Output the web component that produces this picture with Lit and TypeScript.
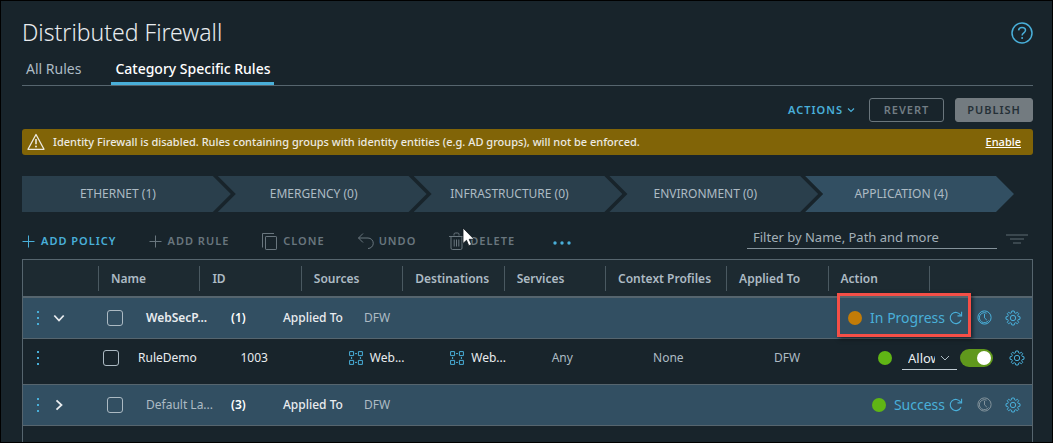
import { LitElement, html, svg, css, nothing } from "lit";
import { customElement, state } from "lit/decorators.js";
import { classMap } from "lit/directives/class-map.js";

const icon = (size: number, body: unknown, cls = "") => html`
  <svg class="icon ${cls}" width=${size} height=${size} viewBox="0 0 ${size} ${size}" aria-hidden="true">${body}</svg>
`;

const plus = () => icon(13, svg`<path d="M6.5 .5v12M.5 6.5h12" />`, "plus");
const clone = () => icon(18, svg`<path d="M1.500 15.500V1.500H13" /><rect x="4.500" y="4.500" width="11" height="13" rx=".6" />`);
const undo = () => icon(18, svg`<path d="M6 1.500 1.500 6 6 10.500M1.500 6H11a5 5 0 0 1 0 10.500" />`);
const trash = () => icon(18, svg`<path d="M1 4.500h15M3 4.500V16q0 1.500 1.500 1.500h8q1.500 0 1.500-1.500V4.500M6 3.500V2.300Q6 1 7.300 1h2.400Q11 1 11 2.300v1.200M6.200 7.500v7M8.500 7.500v7M10.800 7.500v7" />`);
const help = () => icon(22, svg`<circle cx="11" cy="11" r="10" stroke-width="1.500" /><path stroke-width="1.500" d="M7.600 8.400C7.700 6.500 9.200 5.400 11 5.400c2 0 3.500 1.200 3.500 2.900 0 2.500-3.400 2.500-3.400 5.100" /><circle class="fill" cx="11.100" cy="16" r="1" />`);
const warning = () => icon(18, svg`<path stroke-width="1.300" stroke-linejoin="round" d="M9 1.500 17 16.300H1z" /><path stroke-width="1.600" d="M9 6v5.200" /><circle class="fill" cx="9" cy="13.400" r="1" />`);
const down = (size = 12) => icon(size, size === 12
  ? svg`<path stroke-width="1.800" d="m1.300 3.500 4.700 5 4.700-5" />`
  : svg`<path stroke-width="1.200" d="m1 2.500 3 3 3-3" />`);
const right = () => icon(12, svg`<path stroke-width="1.800" d="m3.500 1.300 5 4.700-5 4.700" />`);
const refresh = () => icon(14, svg`<path stroke-width="1.100" d="M12 9.200A5.600 5.600 0 1 1 11.600 4M12.600 .8v4.100H8.500" />`);
const clock = () => icon(15, svg`<circle cx="7.500" cy="7.500" r="6.600" /><path d="M9.600 3.200A5 5 0 1 0 11.500 10.500M7.500 3.900v4l2.300 2.100" />`);
const gear = () => icon(16, svg`<circle cx="8" cy="8" r="2.700" /><path stroke-linejoin="round" d="m6.800 1-.4 1.800-1.200.5L3.600 2.300 2.300 3.600l1 1.600-.5 1.200L1 6.800v2.400l1.800.4.5 1.200-1 1.600 1.300 1.300 1.600-1 1.200.5.400 1.800h2.400l.4-1.800 1.200-.5 1.600 1 1.300-1.300-1-1.600.5-1.200 1.800-.4V6.800l-1.800-.4-.5-1.200 1-1.600-1.300-1.300-1.600 1-1.200-.5L9.200 1z" />`);
const group = () => icon(14, svg`<path d="M.6.6h4v4h-4zM9.400.6h4v4h-4zM.6 9.400h4v4h-4zM9.400 9.400h4v4h-4zM6 2.600h2M6 11.400h2M2.600 6v2M11.400 6v2" />`);
const kebab = () => icon(14, svg`<path class="fill" d="M6 0h2v2H6zM6 6h2v2H6zM6 12h2v2H6z" />`);

interface Policy {
  name: string;
  count: number;
  status: string;
  muted: boolean;
  pending: boolean;
  open: boolean;
}

@customElement("app-root")
export class AppRoot extends LitElement {
  static styles = css`
    :host {
      display: flex;
      flex-direction: column;
      box-sizing: border-box;
      min-height: 100vh;
      padding: 16px 19px 0 21px;
      border: 1px solid #000;
      background: #18242b;
      color: #adbbc4;
      font: 12px/16px "Noto Sans", "Open Sans", sans-serif;
    }
    * { box-sizing: border-box; }
    button, input, select { font: inherit; color: inherit; }
    button { display: inline-flex; align-items: center; margin: 0; padding: 0; border: 0; background: none; }
    .icon { display: block; flex: none; fill: none; stroke: currentColor; }
    .fill { fill: currentColor; stroke: none; }
    header { display: flex; justify-content: space-between; }
    h1 { margin: 0; font-size: 23px; line-height: 30px; font-weight: 300; color: #e9ecef; }
    .help { color: #49afd9; height: 32px; }
    .tabs { display: flex; gap: 26px; margin-top: 7px; border-bottom: 1px solid #56656e; }
    .tab { height: 29px; padding: 0 4px 3px; font-size: 14px; }
    .tab.on { color: #fff; font-weight: 500; box-shadow: inset 0 -3px #49afd9; }
    .top-actions { display: flex; justify-content: flex-end; align-items: center; margin-top: 12px; }
    .caps { font-size: 11px; letter-spacing: 1px; font-weight: 600; }
    .actions { gap: 4px; margin-right: 14px; color: #49afd9; }
    .box { justify-content: center; height: 24px; border: 1px solid #6a767d; border-radius: 3px; color: #727d84; }
    .revert { width: 75px; margin-right: 11px; }
    .publish { width: 78px; background: #737b80; border-color: #737b80; color: #253037; }
    .banner { display: flex; align-items: center; height: 26px; margin-top: 7px; padding: 0 12px 0 5px; border-radius: 3px; background: #816407; color: #eceae2; }
    .banner p { flex: 1; margin: 0 0 0 8px; font-size: 11px; font-weight: 500; }
    .banner a { color: #fff; font-size: 11px; font-weight: 500; }
    .steps { display: flex; height: 36px; margin: 21px 19px 0 0; }
    .step { flex: 1; justify-content: center; padding-right: 17px; background: #2a3f4c; clip-path: polygon(0 0, calc(100% - 18px) 0, 100% 50%, calc(100% - 18px) 100%, 0 100%, 18px 50%); }
    .step:first-child { clip-path: polygon(0 0, calc(100% - 18px) 0, 100% 50%, calc(100% - 18px) 100%, 0 100%); }
    .step + .step { margin-left: -13px; padding-left: 0; }
    .step.on { background: #324f62; }
    .toolbar { display: flex; align-items: center; height: 47px; padding-top: 11px; color: #69767e; }
    .toolbar button { gap: 4px; white-space: nowrap; }
    .plus { margin-right: 2px; }
    .tools { display: flex; gap: 32px; align-items: center; flex: 1; }
    .tools .add { color: #49afd9; }
    .delete { position: relative; }
    .cursor { position: absolute; left: 14px; top: -5px; }
    .more { color: #49afd9; margin-left: 6px; }
    .filter { width: 250px; height: 24px; margin-bottom: 8px; padding: 0 6px; border: 0; border-bottom: 1px solid #84929a; border-radius: 0; background: none; font-size: 13px; outline: 0; }
    .filter::placeholder { color: #a3b0b8; opacity: 1; }
    .lines { margin: 0 5px 4px 9px; color: #46535b; }
    .grid { flex: 1; border: 1px solid #56656e; border-bottom: 0; }
    table { width: 100%; border-collapse: collapse; table-layout: fixed; }
    .c-ctl { width: 75px; }
    .c-wide { width: 12%; }
    .c-end { width: 103px; }
    th { height: 37px; padding: 0; background: #1d2a31; text-align: left; border-bottom: 2px solid #56656e; }
    th span { display: block; height: 25px; padding-left: 12px; border-left: 1px solid #4a5961; line-height: 25px; font-weight: 600; white-space: nowrap; }
    th:first-child span { border: 0; }
    td { padding: 0; height: 41px; border-bottom: 1px solid #56656e; white-space: nowrap; }
    .policy { background: #324f62; }
    .rule td { height: 46px; padding-bottom: 6px; }
    .line { display: flex; align-items: center; }
    .ctl { gap: 8px; padding-left: 8px; }
    .kebab { color: #49afd9; }
    .ctl .caret { color: #e9ecef; }
    .check { appearance: none; flex: none; width: 16px; height: 16px; margin: 0; border: 1px solid #acbac3; border-radius: 3px; background: none; }
    .policy .main { padding-left: 9px; }
    .name { width: 72px; margin-left: 23px; color: #e9ecef; font-weight: 600; }
    .name.muted { color: #adbbc4; font-weight: 400; }
    .count { width: 52px; margin-left: 13px; color: #fff; font-weight: 600; }
    .applied { width: 81px; color: #e9ecef; font-weight: 500; }
    .rule .main { padding-left: 5px; }
    .rule .main label { margin-left: 19px; }
    .bright { color: #e9ecef; }
    .id { padding-left: 41px; }
    .value { gap: 7px; padding-left: 48px; }
    .ends { justify-content: flex-end; padding-right: 11px; color: #49afd9; }
    .rule .ends { padding-right: 7px; }
    .state { position: relative; display: flex; align-items: center; gap: 4px; margin-right: 14px; font-size: 14px; }
    .state a { margin-left: 4px; color: inherit; text-decoration: none; }
    .dot { width: 14px; height: 14px; border-radius: 50%; background: #60b515; }
    .dot.wait { background: #c27c08; }
    .mark { position: absolute; inset: -17px -8px -11px -11px; border: 3px solid #f54f47; box-shadow: 2px 2px 4px #0008; pointer-events: none; }
    .history { margin-right: 13px; }
    .history.off { color: #82929b; }
    .pick { position: relative; display: flex; align-items: center; width: 55px; margin: 0 3px 0 10px; color: #adbbc4; }
    .pick select { width: 100%; height: 24px; padding: 0 22px 0 6px; border: 0; border-bottom: 1px solid #c2cdd4; border-radius: 0; background: none; appearance: none; color: #e9ecef; font-size: 13px; overflow: hidden; }
    .pick .icon { position: absolute; right: 7px; pointer-events: none; }
    .toggle { appearance: none; display: flex; align-items: center; justify-content: flex-end; width: 33px; height: 18px; margin: 0 16px 0 0; padding: 2px; border-radius: 9px; background: #60981c; }
    .toggle::before { content: ""; width: 14px; height: 14px; border-radius: 50%; background: #fff; }
    .toggle:not(:checked) { justify-content: flex-start; background: #56656e; }
  `;

  @state() private step = 4;
  @state() private policies: Policy[] = [
    { name: "WebSecP...", count: 1, status: "In Progress", muted: false, pending: true, open: true },
    { name: "Default La...", count: 3, status: "Success", muted: true, pending: false, open: false },
  ];

  private steps = ["ETHERNET (1)", "EMERGENCY (0)", "INFRASTRUCTURE (0)", "ENVIRONMENT (0)", "APPLICATION (4)"];
  private columns = ["", "Name", "ID", "Sources", "Destinations", "Services", "Context Profiles", "Applied To", "Action", ""];

  private toggle(p: Policy) {
    this.policies = this.policies.map((q) => (q === p ? { ...q, open: !q.open } : q));
  }

  private policyRow(p: Policy) {
    return html`
      <tr class="policy">
        <td>
          <div class="line ctl">
            <button class="kebab" aria-label="Policy menu">${kebab()}</button>
            <button class="caret" aria-label="Expand" aria-expanded=${p.open} @click=${() => this.toggle(p)}>${p.open ? down() : right()}</button>
          </div>
        </td>
        <td colspan="6">
          <div class="line main">
            <input class="check" type="checkbox" aria-label=${p.name} />
            <span class=${classMap({ name: true, muted: p.muted })}>${p.name}</span>
            <span class="count">(${p.count})</span>
            <span class="applied">Applied To</span>
            <span>DFW</span>
          </div>
        </td>
        <td colspan="3">
          <div class="line ends">
            <div class="state">
              <span class=${classMap({ dot: true, wait: p.pending })}></span>
              <a href="#status">${p.status}</a>
              <button aria-label="Refresh">${refresh()}</button>
              ${p.pending ? html`<span class="mark"></span>` : nothing}
            </div>
            <button class=${classMap({ history: true, off: !p.pending })} aria-label="History">${clock()}</button>
            <button aria-label="Settings">${gear()}</button>
          </div>
        </td>
      </tr>
    `;
  }

  private ruleRow() {
    return html`
      <tr class="rule">
        <td><div class="line ctl"><button class="kebab" aria-label="Rule menu">${kebab()}</button></div></td>
        <td>
          <div class="line main">
            <input class="check" type="checkbox" id="rule" />
            <label class="bright" for="rule">RuleDemo</label>
          </div>
        </td>
        <td><div class="id bright">1003</div></td>
        ${[0, 1].map(() => html`<td><div class="line value kebab">${group()}<span class="bright">Web...</span></div></td>`)}
        <td><div class="value">Any</div></td>
        <td><div class="value">None</div></td>
        <td><div class="value">DFW</div></td>
        <td colspan="2">
          <div class="line ends">
            <span class="dot"></span>
            <span class="pick">
              <select aria-label="Action"><option>Allow</option><option>Drop</option><option>Reject</option></select>
              ${icon(10, svg`<path d="m1 3 4 4 4-4" />`)}
            </span>
            <input class="toggle" type="checkbox" role="switch" aria-label="Enabled" checked />
            <button aria-label="Settings">${gear()}</button>
          </div>
        </td>
      </tr>
    `;
  }

  render() {
    return html`
      <header>
        <h1>Distributed Firewall</h1>
        <button class="help" aria-label="Help">${help()}</button>
      </header>
      <nav class="tabs">
        <button class="tab">All Rules</button>
        <button class="tab on">Category Specific Rules</button>
      </nav>
      <div class="top-actions">
        <button class="actions caps">ACTIONS ${down(8)}</button>
        <button class="box revert caps">REVERT</button>
        <button class="box publish caps">PUBLISH</button>
      </div>
      <div class="banner">
        ${warning()}
        <p>Identity Firewall is disabled. Rules containing groups with identity entities (e.g. AD groups), will not be enforced.</p>
        <a href="#enable">Enable</a>
      </div>
      <nav class="steps">
        ${this.steps.map((s, i) => html`<button class=${classMap({ step: true, on: i === this.step })} @click=${() => (this.step = i)}>${s}</button>`)}
      </nav>
      <div class="toolbar">
        <div class="tools">
          <button class="add caps">${plus()}ADD POLICY</button>
          <button class="caps">${plus()}ADD RULE</button>
          <button class="caps">${clone()}CLONE</button>
          <button class="caps">${undo()}UNDO</button>
          <button class="delete caps">
            ${trash()}DELETE
            <svg class="cursor" width="14" height="20" viewBox="0 0 14 20" aria-hidden="true"><path fill="#fff" stroke="#10181d" stroke-width=".8" d="M1 1v15.500l3.500-3.200 2.300 5.400 2.700-1.200-2.300-5.200h4.900z" /></svg>
          </button>
          <button class="more" aria-label="More">
            <svg class="icon" width="18" height="16" viewBox="0 0 18 16" aria-hidden="true"><g class="fill"><circle cx="2" cy="10" r="1.700" /><circle cx="9" cy="10" r="1.700" /><circle cx="16" cy="10" r="1.700" /></g></svg>
          </button>
        </div>
        <input class="filter" type="text" placeholder="Filter by Name, Path and more" aria-label="Filter" />
        <button class="lines" aria-label="Filter options">
          <svg class="icon" width="22" height="12" viewBox="0 0 22 12" aria-hidden="true"><path stroke-width="1.500" d="M0 2h22M4 6h14M7 10h8" /></svg>
        </button>
      </div>
      <div class="grid">
        <table>
          <colgroup>
            <col class="c-ctl" /><col /><col /><col /><col /><col /><col class="c-wide" /><col /><col /><col class="c-end" />
          </colgroup>
          <thead><tr>${this.columns.map((c) => html`<th><span>${c}</span></th>`)}</tr></thead>
          <tbody>
            ${this.policies.map((p, i) => html`${this.policyRow(p)}${i === 0 && p.open ? this.ruleRow() : nothing}`)}
          </tbody>
        </table>
      </div>
    `;
  }
}
